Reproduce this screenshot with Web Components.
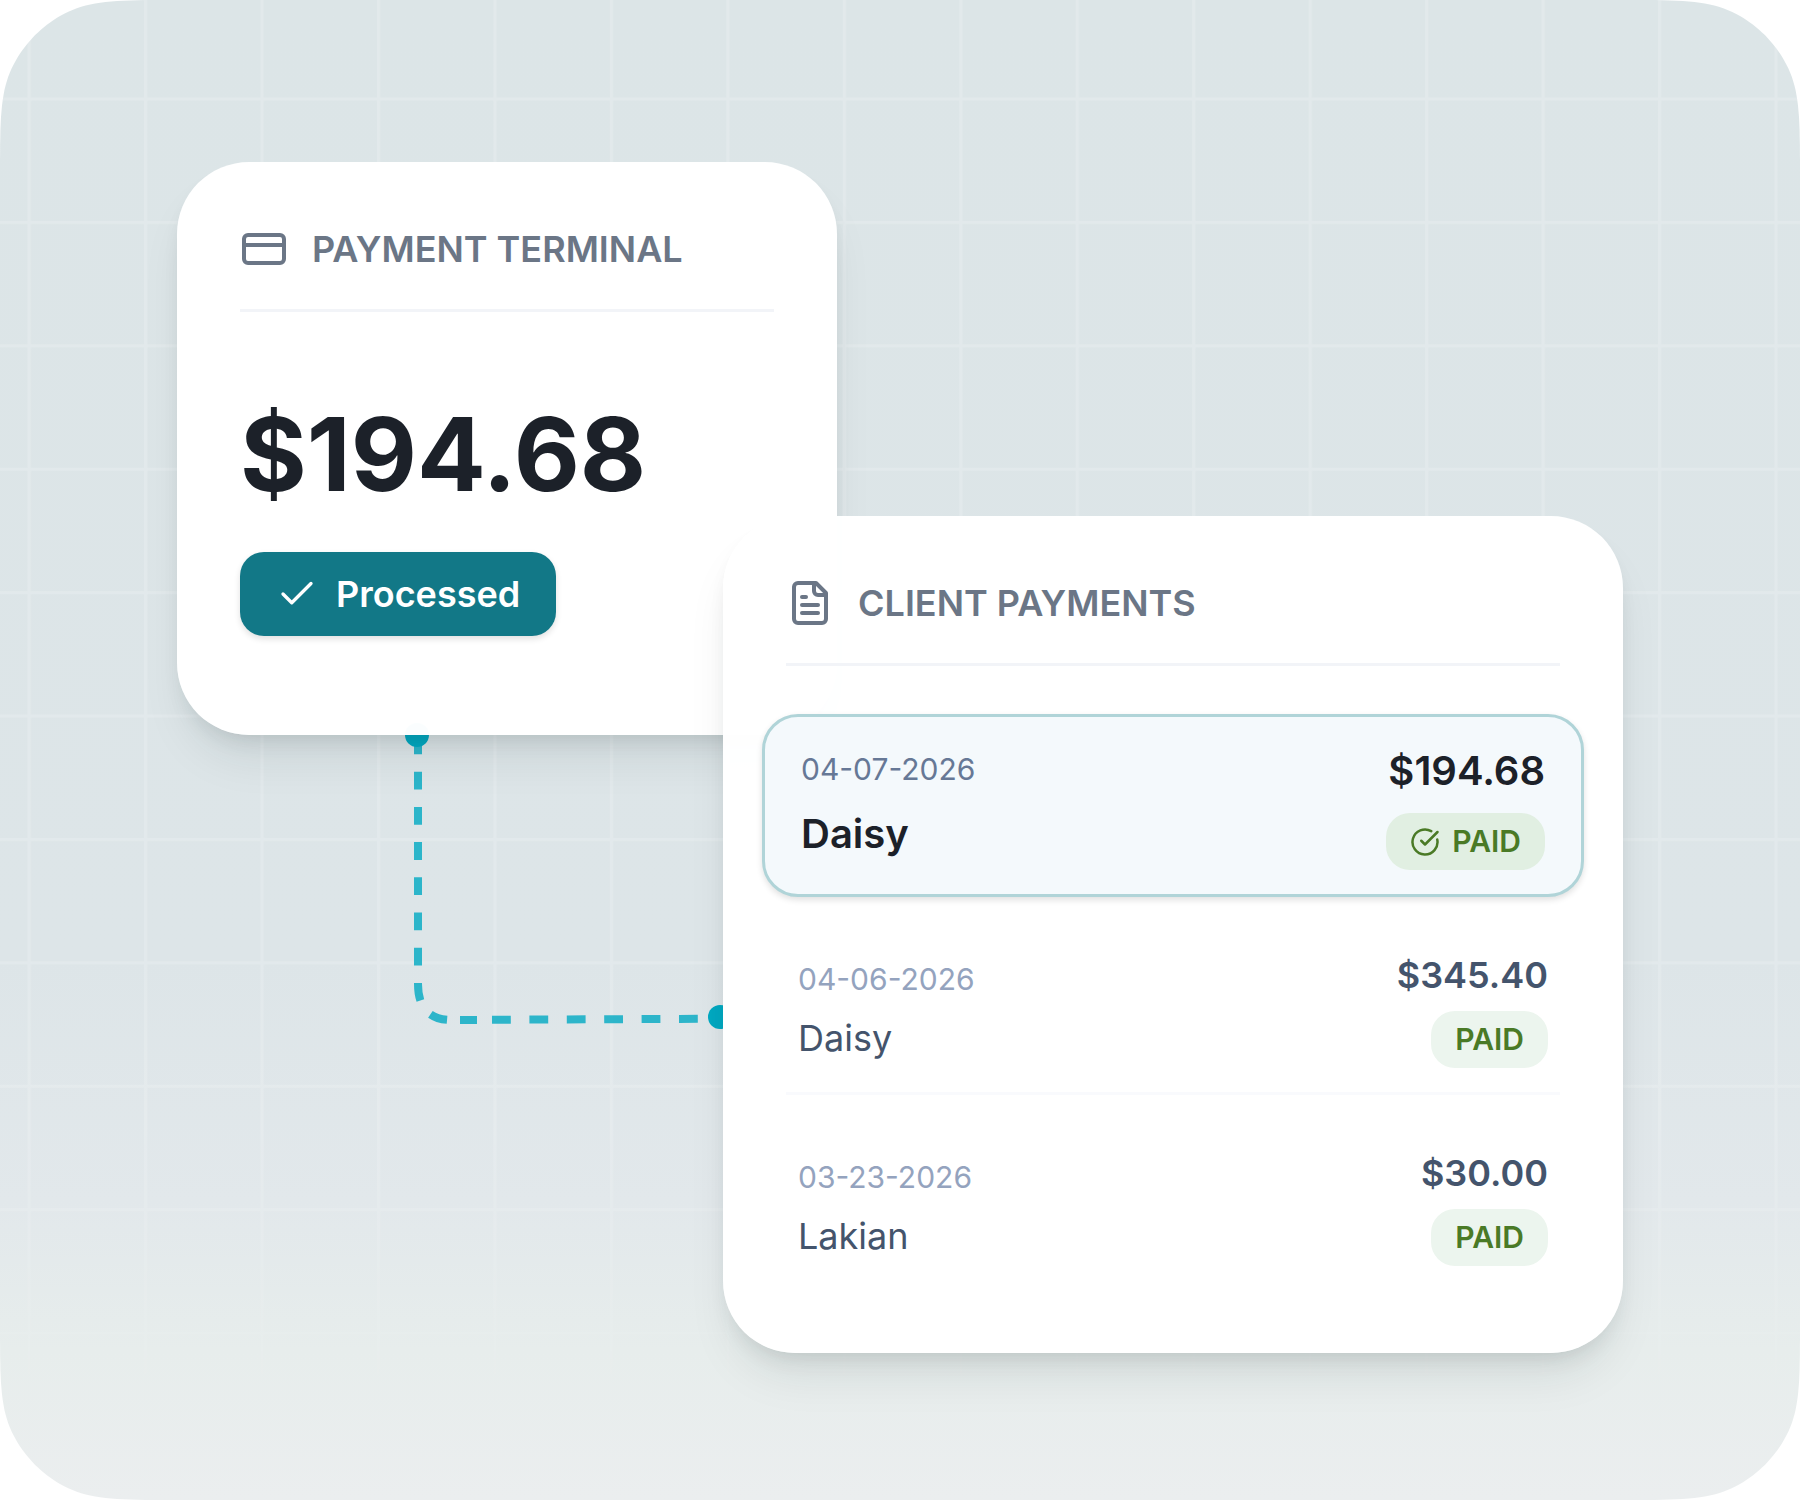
<!DOCTYPE html>
<html lang="en">
<head>
<meta charset="utf-8">
<meta name="viewport" content="width=device-width, initial-scale=1">
<title>Payments</title>
<style>
  body {
    margin: 0;
    background: #fff;
    font-family: Inter, "Open Sans", sans-serif;
  }
</style>
</head>
<body>
<payment-scene>
  <panel-card slot="terminal" icon="card" heading="PAYMENT TERMINAL">
    <terminal-charge amount="$194.68">Processed</terminal-charge>
  </panel-card>
  <panel-card slot="payments" icon="file" heading="CLIENT PAYMENTS">
    <payment-list>
      <payment-row highlighted date="04-07-2026" amount="$194.68" status="PAID">Daisy</payment-row>
      <payment-row date="04-06-2026" amount="$345.40" status="PAID">Daisy</payment-row>
      <payment-row date="03-23-2026" amount="$30.00" status="PAID">Lakian</payment-row>
    </payment-list>
  </panel-card>
</payment-scene>

<script>
const ICONS = {
  card: '<rect width="20" height="14" x="2" y="5" rx="2"/><path d="M2 10h20"/>',
  file: `<path d="M15 2H6a2 2 0 0 0-2 2v16a2 2 0 0 0 2 2h12a2 2 0 0 0 2-2V7Z"/>
    <path d="M14 2v4a2 2 0 0 0 2 2h4"/><path d="M10 9H8"/><path d="M16 13H8"/><path d="M16 17H8"/>`,
  check: '<path d="M20 6 9 17l-5-5"/>',
  done: '<path d="M21.801 10A10 10 0 1 1 17 3.335"/><path d="m9 11 3 3L22 4"/>'
};

class LineIcon extends HTMLElement {
  constructor() {
    super();
    this.attachShadow({ mode: 'open' });
  }

  connectedCallback() {
    this.shadowRoot.innerHTML = `
      <style>
        :host {
          display: block;
          flex: none;
          width: 48px;
          height: 48px;
        }
        svg {
          display: block;
          width: 100%;
          height: 100%;
          fill: none;
          stroke: currentColor;
          stroke-width: var(--icon-stroke, 2);
          stroke-linecap: round;
          stroke-linejoin: round;
        }
      </style>
      <svg viewBox="0 0 24 24" aria-hidden="true">${ICONS[this.getAttribute('name')]}</svg>
    `;
  }
}

class PanelCard extends HTMLElement {
  constructor() {
    super();
    this.attachShadow({ mode: 'open' });
  }

  connectedCallback() {
    this.shadowRoot.innerHTML = `
      <style>
        :host {
          display: block;
          box-sizing: border-box;
          padding: 63px;
          border-radius: 72px;
          background: rgba(255, 255, 255, 0.98);
          box-shadow: 0 30px 48px -12px rgba(20, 40, 40, 0.1), 0 12px 24px -12px rgba(20, 40, 40, 0.16);
        }
        header {
          display: flex;
          align-items: center;
          gap: 24px;
          padding-bottom: 36px;
          border-bottom: 3px solid #f2f4f8;
          color: #6b7686;
        }
        h2 {
          margin: 0;
          font-size: 36px;
          line-height: 48px;
          font-weight: 600;
        }
      </style>
      <header>
        <line-icon name="${this.getAttribute('icon')}"></line-icon>
        <h2>${this.getAttribute('heading')}</h2>
      </header>
      <slot></slot>
    `;
  }
}

class TerminalCharge extends HTMLElement {
  constructor() {
    super();
    this.attachShadow({ mode: 'open' });
  }

  connectedCallback() {
    this.shadowRoot.innerHTML = `
      <style>
        :host {
          display: flex;
          flex-direction: column;
          align-items: flex-start;
          gap: 32px;
          padding: 76px 0 36px;
        }
        .amount {
          color: #1c2129;
          font-size: 102px;
          line-height: 132px;
          font-weight: 700;
        }
        .state {
          display: flex;
          align-items: center;
          gap: 18px;
          padding: 15px 36px;
          border-radius: 24px;
          background: #127887;
          box-shadow: 0 3px 6px rgba(0, 0, 0, 0.12);
          color: #fff;
          font-size: 36px;
          line-height: 54px;
          font-weight: 600;
        }
        line-icon {
          width: 42px;
          height: 42px;
          --icon-stroke: 1.9;
        }
      </style>
      <div class="amount">${this.getAttribute('amount')}</div>
      <div class="state"><line-icon name="check"></line-icon><slot></slot></div>
    `;
  }
}

class PaymentList extends HTMLElement {
  constructor() {
    super();
    this.attachShadow({ mode: 'open' });
    this.shadowRoot.innerHTML = `
      <style>
        :host {
          display: flex;
          flex-direction: column;
          gap: 27px;
          padding-top: 48px;
        }
      </style>
      <slot></slot>
    `;
  }

  connectedCallback() {
    this.setAttribute('role', 'list');
  }
}

class PaymentRow extends HTMLElement {
  constructor() {
    super();
    this.attachShadow({ mode: 'open' });
  }

  connectedCallback() {
    const highlighted = this.hasAttribute('highlighted');
    this.setAttribute('role', 'listitem');
    this.shadowRoot.innerHTML = `
      <style>
        :host {
          display: flex;
          align-items: flex-end;
          justify-content: space-between;
          padding: 24px 12px;
          border-bottom: 3px solid #f9fafd;
          color: #44546c;
        }
        :host(:last-child) {
          border-bottom: 0;
        }
        .client, .payment {
          display: flex;
          flex-direction: column;
          gap: 6px;
        }
        .payment {
          align-items: flex-end;
          gap: 9px;
        }
        .date {
          color: #94a3be;
          font-size: 30px;
          line-height: 45px;
          font-weight: 400;
        }
        .name {
          font-size: 36px;
          line-height: 60px;
          font-weight: 400;
        }
        .amount {
          font-size: 36px;
          line-height: 54px;
          font-weight: 600;
        }
        .status {
          display: flex;
          align-items: center;
          gap: 12px;
          padding: 6px 24px;
          border-radius: 24px;
          background: #ecf5ee;
          color: #4a7a26;
          font-size: 30px;
          line-height: 45px;
          font-weight: 600;
        }
        line-icon {
          width: 30px;
          height: 30px;
        }
        :host([highlighted]) {
          align-items: center;
          margin: 0 -24px;
          padding: 24px 36px;
          border: 3px solid #b0d4d8;
          border-radius: 36px;
          background: #f4f9fc;
          box-shadow: 0 3px 6px rgba(0, 0, 0, 0.12);
          color: #1c2129;
        }
        :host([highlighted]) .client,
        :host([highlighted]) .payment {
          gap: 12px;
        }
        :host([highlighted]) .date {
          color: #667896;
        }
        :host([highlighted]) .name,
        :host([highlighted]) .amount {
          font-size: 40px;
          line-height: 60px;
          font-weight: 600;
        }
        :host([highlighted]) .status {
          background: #e1efe2;
        }
      </style>
      <div class="client">
        <time class="date">${this.getAttribute('date')}</time>
        <span class="name"><slot></slot></span>
      </div>
      <div class="payment">
        <span class="amount">${this.getAttribute('amount')}</span>
        <span class="status">
          ${highlighted ? '<line-icon name="done"></line-icon>' : ''}
          <span>${this.getAttribute('status')}</span>
        </span>
      </div>
    `;
  }
}

// Smoothed corner: a 30 degree arc that eases into both edges,
// as a polygon that stretches with the box
function smoothClip(r) {
  const bend = Math.PI / 6;
  const endX = r * (1 - Math.sin(bend));
  const endY = r * (1 - Math.cos(bend));
  const start = r * 1.5;
  const knee = endX + endY / Math.tan(bend);
  const near = knee + (start - knee) * 0.28;
  const half = [];
  for (let i = 0; i < 20; i++) {
    const t = i / 20;
    const u = 1 - t;
    half.push([
      u * u * u * start + 3 * u * u * t * near + 3 * u * t * t * knee + t * t * t * endX,
      t * t * t * endY
    ]);
  }
  for (let i = 0; i <= 8; i++) {
    const a = bend + (i / 8) * (Math.PI / 4 - bend);
    half.push([r * (1 - Math.sin(a)), r * (1 - Math.cos(a))]);
  }
  const corner = [...half, ...half.slice(0, -1).reverse().map(([x, y]) => [y, x])]
    .map(([x, y]) => [x.toFixed(1), y.toFixed(1)]);
  const back = corner.slice().reverse();
  return 'polygon(' + [
    ...back.map(([x, y]) => `${x}px ${y}px`),
    ...corner.map(([x, y]) => `calc(100% - ${x}px) ${y}px`),
    ...back.map(([x, y]) => `calc(100% - ${x}px) calc(100% - ${y}px)`),
    ...corner.map(([x, y]) => `${x}px calc(100% - ${y}px)`)
  ].join(', ') + ')';
}

class PaymentScene extends HTMLElement {
  constructor() {
    super();
    this.attachShadow({ mode: 'open' });
    this.shadowRoot.innerHTML = `
      <style>
        :host {
          display: grid;
          grid-template-columns: 177fr 546fr 114fr 786fr 177fr;
          grid-template-rows: 354px auto;
          align-content: start;
          position: relative;
          box-sizing: border-box;
          min-height: 100vh;
          padding: 162px 0 147px;
          background: linear-gradient(#dce5e7, #dde5e8 64%, #e2e8eb 80%, #e7edec 90%, #ebeeef);
        }
        .lines {
          position: absolute;
          inset: 0;
          width: 100%;
          height: 100%;
          -webkit-mask-image: linear-gradient(#000 75%, transparent 97%);
          mask-image: linear-gradient(#000 75%, transparent 97%);
        }
        .connector {
          grid-area: 1 / 2 / 3 / 3;
          position: relative;
          width: 100%;
          height: 878px;
        }
        slot[name="terminal"]::slotted(*) {
          grid-area: 1 / 2 / 3 / 4;
          align-self: start;
          position: relative;
        }
        slot[name="payments"]::slotted(*) {
          grid-area: 2 / 3 / 3 / 5;
          position: relative;
        }
      </style>
      <svg class="lines" aria-hidden="true">
        <defs>
          <pattern id="cell" x="27.5" y="97.5" width="116.46" height="123.4" patternUnits="userSpaceOnUse">
            <path d="M0 0h3.4v123.4h-3.4zM3.4 0h113.06v3.2h-113.06z" fill="#fff" fill-opacity="0.17"/>
          </pattern>
        </defs>
        <rect width="100%" height="100%" fill="url(#cell)"/>
      </svg>
      <svg class="connector" viewBox="0 0 546 878" preserveAspectRatio="none" aria-hidden="true">
        <g fill="none" stroke="#00a9c2" stroke-width="8" stroke-opacity="0.8">
          <path d="M241 574.5V822Q241 858 275 858" stroke-dasharray="17.8 17.4 17.8 17.4 17.8 17.4 17.8 17.4 17.8 17.4 17.8 17.4 17.8 17.4 17.8 17.4 17.8 100"/>
          <path d="M283 858H300"/>
          <path d="M315 857.8L522 856.8" stroke-dasharray="18.8 18.6"/>
        </g>
        <circle cx="240" cy="573" r="12" fill="#00a9c2"/>
        <circle cx="543" cy="855" r="12" fill="#00a9c2"/>
      </svg>
      <slot name="terminal"></slot>
      <slot name="payments"></slot>
    `;
  }

  connectedCallback() {
    this.style.clipPath = smoothClip(120);
  }
}

customElements.define('line-icon', LineIcon);
customElements.define('panel-card', PanelCard);
customElements.define('terminal-charge', TerminalCharge);
customElements.define('payment-list', PaymentList);
customElements.define('payment-row', PaymentRow);
customElements.define('payment-scene', PaymentScene);
</script>
</body>
</html>
